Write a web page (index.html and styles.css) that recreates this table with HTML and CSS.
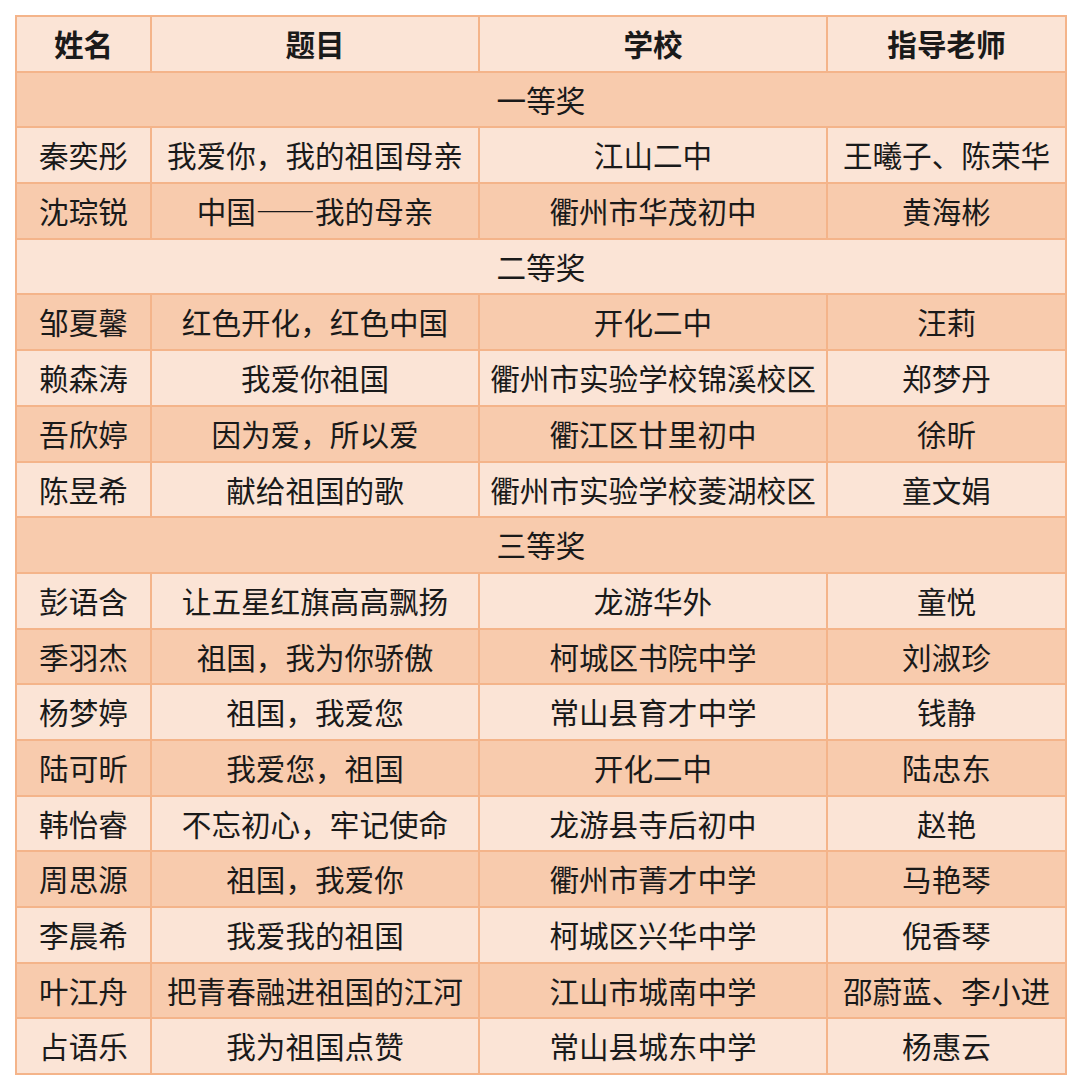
FILE: index.html
```html
<!DOCTYPE html>
<html lang="zh">
<head>
<meta charset="utf-8">
<link rel="stylesheet" href="styles.css">
</head>
<body>
<div class="wrap">
<table class="awards">
<colgroup><col class="c1"><col class="c2"><col class="c3"><col class="c4"></colgroup>
<thead>
<tr class="light"><th>姓名</th><th>题目</th><th>学校</th><th>指导老师</th></tr>
</thead>
<tbody>
<tr class="dark"><td colspan="4">一等奖</td></tr>
<tr class="light"><td>秦奕彤</td><td>我爱你，我的祖国母亲</td><td>江山二中</td><td>王曦子、陈荣华</td></tr>
<tr class="dark"><td>沈琮锐</td><td>中国——我的母亲</td><td>衢州市华茂初中</td><td>黄海彬</td></tr>
<tr class="light"><td colspan="4">二等奖</td></tr>
<tr class="dark"><td>邹夏馨</td><td>红色开化，红色中国</td><td>开化二中</td><td>汪莉</td></tr>
<tr class="light"><td>赖森涛</td><td>我爱你祖国</td><td>衢州市实验学校锦溪校区</td><td>郑梦丹</td></tr>
<tr class="dark"><td>吾欣婷</td><td>因为爱，所以爱</td><td>衢江区廿里初中</td><td>徐昕</td></tr>
<tr class="light"><td>陈昱希</td><td>献给祖国的歌</td><td>衢州市实验学校菱湖校区</td><td>童文娟</td></tr>
<tr class="dark"><td colspan="4">三等奖</td></tr>
<tr class="light"><td>彭语含</td><td>让五星红旗高高飘扬</td><td>龙游华外</td><td>童悦</td></tr>
<tr class="dark"><td>季羽杰</td><td>祖国，我为你骄傲</td><td>柯城区书院中学</td><td>刘淑珍</td></tr>
<tr class="light"><td>杨梦婷</td><td>祖国，我爱您</td><td>常山县育才中学</td><td>钱静</td></tr>
<tr class="dark"><td>陆可昕</td><td>我爱您，祖国</td><td>开化二中</td><td>陆忠东</td></tr>
<tr class="light"><td>韩怡睿</td><td>不忘初心，牢记使命</td><td>龙游县寺后初中</td><td>赵艳</td></tr>
<tr class="dark"><td>周思源</td><td>祖国，我爱你</td><td>衢州市菁才中学</td><td>马艳琴</td></tr>
<tr class="light"><td>李晨希</td><td>我爱我的祖国</td><td>柯城区兴华中学</td><td>倪香琴</td></tr>
<tr class="dark"><td>叶江舟</td><td>把青春融进祖国的江河</td><td>江山市城南中学</td><td>邵蔚蓝、李小进</td></tr>
<tr class="light"><td>占语乐</td><td>我为祖国点赞</td><td>常山县城东中学</td><td>杨惠云</td></tr>
</tbody>
</table>
</div>
</body>
</html>
```

FILE: styles.css
```css
html, body {
  margin: 0;
  padding: 0;
  background: #ffffff;
}
.wrap {
  padding: 15px 0 0 15px;
}
.awards {
  border-collapse: collapse;
  table-layout: fixed;
  width: 1050px;
  font-family: "Noto Sans CJK SC", "Noto Sans", sans-serif;
  font-size: 29.6px;
  color: #1a1a1a;
}
.c1 { width: 135px; }
.c2 { width: 328px; }
.c3 { width: 348px; }
.c4 { width: 239px; }
.awards th,
.awards td {
  border: 2px solid #f4b48a;
  height: 53.7px;
  padding: 0;
  text-align: center;
  vertical-align: middle;
  line-height: 1;
  white-space: nowrap;
  overflow: hidden;
}
.awards th {
  font-weight: 700;
}
.awards td {
  font-weight: 400;
}
.light {
  background: #fbe4d6;
}
.dark {
  background: #f8cbad;
}
```
